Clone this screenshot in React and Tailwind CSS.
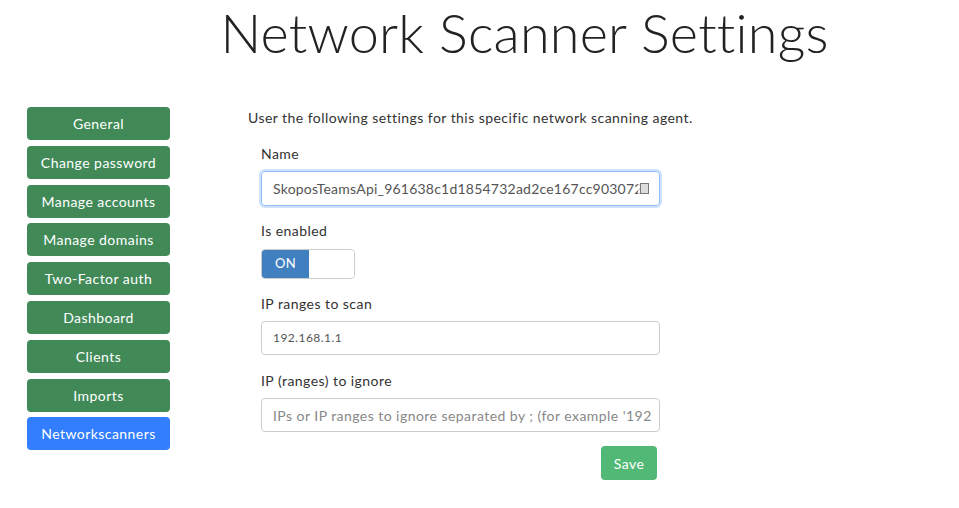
import React from "react";

const items = [
  "General",
  "Change password",
  "Manage accounts",
  "Manage domains",
  "Two-Factor auth",
  "Dashboard",
  "Clients",
  "Imports",
  "Networkscanners",
];

export default function App() {
  return (
    <div className="w-[959px] h-[508px] bg-white text-[#333] font-['Lato','Noto_Sans',sans-serif]">
      <h1 className="pl-[90px] text-center text-[54px] leading-[65px] font-light text-[#222] tracking-[0.2px]">
        Network Scanner Settings
      </h1>
      <div className="flex mt-[42px] tracking-[0.45px]">
        <div className="w-[143px] ml-[27px] flex flex-col gap-[5.8px]">
          {items.map((it) => (
            <div
              key={it}
              className={`h-[33px] rounded-[4px] flex items-center justify-center text-[14px] text-white ${
                it === "Networkscanners" ? "bg-[#337eff]" : "bg-[#418a58]"
              }`}
            >
              {it}
            </div>
          ))}
        </div>
        <div className="ml-[78px] flex-1">
          <p className="text-[14px] leading-[20px] mt-[1px]">
            User the following settings for this specific network scanning agent.
          </p>
          <div className="ml-[13px] w-[399px]">
            <div className="mt-[16px] text-[14px] leading-[20px]">Name</div>
            <div className="mt-[7px] h-[35px] rounded-[4px] border border-[#8fbcf4] shadow-[0_0_0_2px_#cfe2fb] flex items-center px-[11px] text-[14px] text-[#555] relative overflow-hidden">
              <span className="whitespace-nowrap tracking-[0.22px]">SkoposTeamsApi_961638c1d1854732ad2ce167cc903072</span>
              <span className="absolute right-[9px] top-[10px] w-[12px] h-[13px] bg-white/70 flex items-center justify-center">
                <span className="block w-[9px] h-[11px] border border-[#777] bg-[#ddd]"></span>
              </span>
            </div>
            <div className="mt-[15px] text-[14px] leading-[20px]">Is enabled</div>
            <div className="mt-[8px] w-[94px] h-[30px] rounded-[4px] border border-[#ccc] flex overflow-hidden">
              <div className="w-[47px] bg-[#4180c0] text-white text-[13px] flex items-center justify-center">ON</div>
              <div className="flex-1 bg-white"></div>
            </div>
            <div className="mt-[15px] text-[14px] leading-[20px]">IP ranges to scan</div>
            <div className="mt-[7px] h-[34px] rounded-[4px] border border-[#ccc] flex items-center px-[11px] text-[12px] text-[#555]">
              192.168.1.1
            </div>
            <div className="mt-[16px] text-[14px] leading-[20px]">IP (ranges) to ignore</div>
            <div className="mt-[7px] h-[34px] rounded-[4px] border border-[#ccc] flex items-center px-[11px] text-[14px] text-[#888] overflow-hidden whitespace-nowrap">
              IPs or IP ranges to ignore separated by ; (for example '192
            </div>
            <div className="flex justify-end mt-[14px] pr-[3px]">
              <div className="w-[56px] h-[34px] rounded-[4px] bg-[#52b875] text-white text-[14px] flex items-center justify-center">
                Save
              </div>
            </div>
          </div>
        </div>
      </div>
    </div>
  );
}
